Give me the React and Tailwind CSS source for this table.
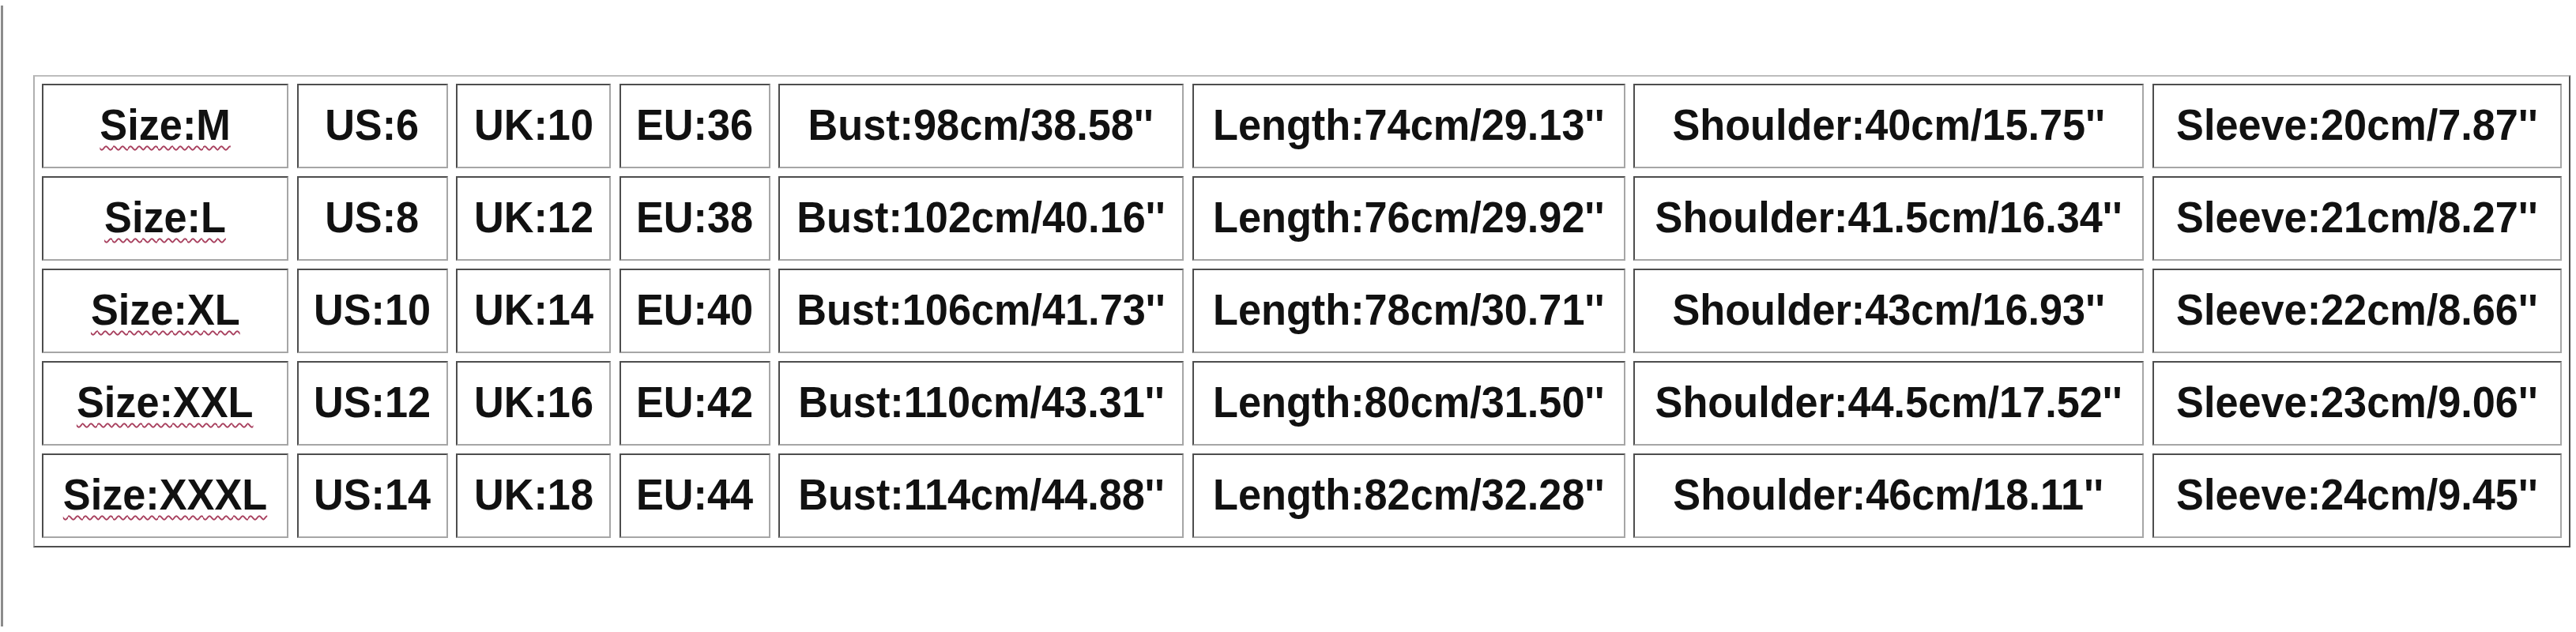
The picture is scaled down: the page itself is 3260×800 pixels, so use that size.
import React from "react";

const rows = [
  ["Size:M", "US:6", "UK:10", "EU:36", "Bust:98cm/38.58''", "Length:74cm/29.13''", "Shoulder:40cm/15.75''", "Sleeve:20cm/7.87''"],
  ["Size:L", "US:8", "UK:12", "EU:38", "Bust:102cm/40.16''", "Length:76cm/29.92''", "Shoulder:41.5cm/16.34''", "Sleeve:21cm/8.27''"],
  ["Size:XL", "US:10", "UK:14", "EU:40", "Bust:106cm/41.73''", "Length:78cm/30.71''", "Shoulder:43cm/16.93''", "Sleeve:22cm/8.66''"],
  ["Size:XXL", "US:12", "UK:16", "EU:42", "Bust:110cm/43.31''", "Length:80cm/31.50''", "Shoulder:44.5cm/17.52''", "Sleeve:23cm/9.06''"],
  ["Size:XXXL", "US:14", "UK:18", "EU:44", "Bust:114cm/44.88''", "Length:82cm/32.28''", "Shoulder:46cm/18.11''", "Sleeve:24cm/9.45''"],
];

function Cell({ text, first }) {
  return (
    <div className="h-[107px] flex items-center justify-center border-2 border-t-[#4d4d4d] border-l-[#4d4d4d] border-b-[#a6a6a6] border-r-[#a6a6a6] bg-white pb-[2px]">
      {first ? (
        <span className="inline-block scale-x-[0.95] underline decoration-wavy decoration-[#a8405e] decoration-[2px] underline-offset-[7px] whitespace-nowrap">
          {text}
        </span>
      ) : (
        <span className="inline-block scale-x-[0.95] whitespace-nowrap">{text}</span>
      )}
    </div>
  );
}

export default function App() {
  return (
    <div className="w-[3260px] h-[800px] bg-white flex items-start overflow-hidden font-['Liberation_Sans',Arial,sans-serif]">
      <div className="ml-[1px] mt-[7px] w-[3px] h-[786px] bg-[#8c8c8c] shrink-0" />
      <div className="ml-[38px] mt-[95px] w-fit border-2 border-t-[#bdbdbd] border-l-[#b0b0b0] border-b-[#4f4f4f] border-r-[#4f4f4f] p-[9px] pb-[10px]">
        <div className="grid grid-cols-[312px_191px_196px_191px_513px_548px_646px_518px] gap-x-[10.5px] gap-y-[10px] text-[55px] font-bold text-[#111] leading-none">
          {rows.map((r, i) =>
            r.map((t, j) => <Cell key={i + "-" + j} text={t} first={j === 0} />)
          )}
        </div>
      </div>
    </div>
  );
}
